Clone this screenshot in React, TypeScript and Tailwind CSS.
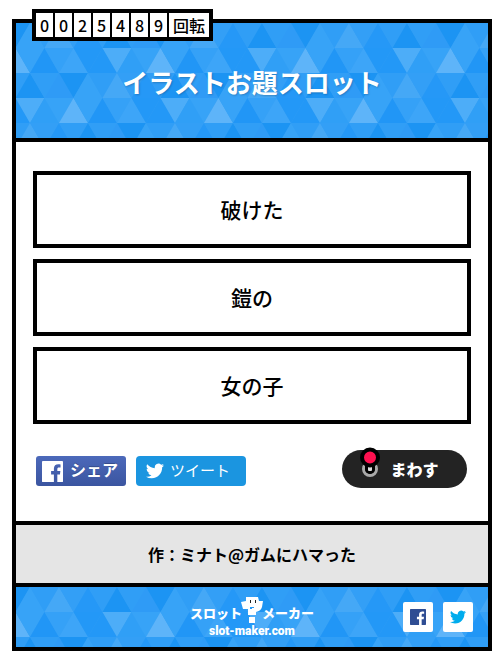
import React, { useId } from 'react';

const UP_A = ['#37a3f7', '#45a8f6', '#2598f7', '#1c94f3', '#2f9bf6'];
const DOWN_A = ['#309ef6', '#339ff6', '#309ef6', '#309ef6', '#1c94f3'];
const UP_B = ['#5eb4f9', '#2196f6', '#3da5f8', '#2398f7', '#309ff6'];
const DOWN_B = ['#37a3f7', '#35a1f7', '#2398f7', '#4dadf8', '#37a3f7'];

const SIDE = 29;
const HALF = SIDE / 2;
const ROW = 25;

function buildTriangles() {
  const shapes: { points: string; fill: string }[] = [];
  for (let pair = 0; pair < 5; pair++) {
    const shift = (pair * 2 * SIDE) % (5 * SIDE);
    for (let i = -10; i < 10; i++) {
      const c = ((i % 5) + 5) % 5;
      const y = pair * ROW * 2;
      const a = 14 + i * SIDE + shift;
      shapes.push({ points: `${a},${y} ${a + HALF},${y + ROW} ${a - HALF},${y + ROW}`, fill: UP_A[c] });
      shapes.push({ points: `${a},${y} ${a + SIDE},${y} ${a + HALF},${y + ROW}`, fill: DOWN_A[c] });
      const b = a - HALF;
      const z = y + ROW;
      shapes.push({ points: `${b},${z} ${b + HALF},${z + ROW} ${b - HALF},${z + ROW}`, fill: UP_B[c] });
      shapes.push({ points: `${b},${z} ${b + SIDE},${z} ${b + HALF},${z + ROW}`, fill: DOWN_B[c] });
    }
  }
  return shapes;
}

const TRIANGLES = buildTriangles();

function TriangleBackdrop() {
  const id = useId();
  return (
    <svg className="absolute inset-0 size-full" aria-hidden="true">
      <defs>
        <pattern id={id} width="145" height="250" patternUnits="userSpaceOnUse">
          <rect width="145" height="250" fill="#309ef6" />
          {TRIANGLES.map((t, i) => (
            <polygon key={i} points={t.points} fill={t.fill} />
          ))}
        </pattern>
      </defs>
      <rect width="100%" height="100%" fill={`url(#${id})`} />
    </svg>
  );
}

const BIRD =
  'M23.95 4.57a10 10 0 0 1-2.82.77 4.96 4.96 0 0 0 2.16-2.72c-.95.55-2 .96-3.13 1.18a4.92 4.92 0 0 0-8.38 4.48C7.69 8.09 4.07 6.13 1.64 3.16a4.93 4.93 0 0 0 1.52 6.57 4.9 4.9 0 0 1-2.23-.61v.06a4.92 4.92 0 0 0 3.95 4.83 5 5 0 0 1-2.21.08 4.94 4.94 0 0 0 4.6 3.42A9.87 9.87 0 0 1 0 19.54a13.99 13.99 0 0 0 7.55 2.21c9.05 0 14-7.5 14-13.98 0-.21 0-.42-.02-.63a9.94 9.94 0 0 0 2.46-2.55z';

function TwitterBird({ className }: { className: string }) {
  return (
    <svg viewBox="0 0 24 24" className={className} fill="currentColor" aria-hidden="true">
      <path d={BIRD} />
    </svg>
  );
}

function FacebookMark({ className }: { className: string }) {
  return (
    <svg viewBox="0 0 24 24" className={className} fill="currentColor" aria-hidden="true">
      <path d="M1 0H23Q24 0 24 1V23Q24 24 23 24H17.500V15.300H20.500L21 11.500H17.500V9.300C17.500 8 18 7.300 19.300 7.300H21.200V4C20.500 3.900 19.600 3.800 18.600 3.800C15.600 3.800 13.600 5.500 13.600 8.700V11.500H10.400V15.300H13.600V24H1Q0 24 0 23V1Q0 0 1 0Z" />
    </svg>
  );
}

function Mascot() {
  return (
    <svg viewBox="0 0 22 26" className="-mx-px h-[26px] w-[22px]" aria-hidden="true">
      <path
        fill="#fff"
        d="M5 0H17L18 4L22 4L21 10Q20 14 15 15V18H7V12H2L0 5L5 4Z"
      />
      <path fill="#2598f7" d="M9 10H13V11H11V12H9Z" />
      <path fill="#fff" d="M8 20H14V26H8Z" />
      <path fill="#222" d="M9 3H10V6H9ZM14 3H15V6H14Z" />
    </svg>
  );
}

function Lever() {
  return (
    <svg viewBox="0 0 22 34" className="h-[34px] w-[22px]" aria-hidden="true">
      <circle cx="11" cy="23" r="6.500" fill="none" stroke="#a9a9a9" strokeWidth="3" />
      <rect x="6" y="14" width="10" height="14" rx="5" fill="#000" />
      <rect x="9" y="19" width="4" height="6" rx="1" fill="#ddd" />
      <circle cx="11" cy="11.500" r="8" fill="#ff1150" stroke="#000" strokeWidth="4" />
    </svg>
  );
}

const DIGITS = ['0', '0', '2', '5', '4', '8', '9'];
const RESULTS = ['破けた', '鎧の', '女の子'];

export default function App() {
  return (
    <div className="bg-white pt-[19px] pr-[10px] pb-[7px] pl-3 font-['Noto_Sans_CJK_JP',sans-serif] text-black">
      <main className="relative border-4 border-black bg-white">
        <div className="absolute -top-[14px] left-4 z-10 flex h-8 gap-[2px] border-4 border-black bg-black text-base leading-6 font-medium">
          {DIGITS.map((d, i) => (
            <span key={i} className="w-[17px] bg-white text-center">
              {d}
            </span>
          ))}
          <span className="w-10 bg-white text-center">回転</span>
        </div>

        <header className="relative flex h-[119px] items-center justify-center border-b-4 border-black pt-[2px]">
          <TriangleBackdrop />
          <h1 className="relative text-[26px] leading-8 font-bold text-white [text-shadow:1px_1px_2px_rgba(0,0,0,0.2)]">
            イラストお題スロット
          </h1>
        </header>

        <section className="px-[17px] pt-[29px] pb-8">
          <ul className="flex flex-col gap-[11px]">
            {RESULTS.map((r) => (
              <li
                key={r}
                className="flex h-[77px] items-center justify-center border-4 border-black pb-[2px] text-[21px] leading-8 font-medium"
              >
                {r}
              </li>
            ))}
          </ul>

          <div className="mt-[26px] flex items-end justify-between pr-1 pl-[3px]">
            <div className="flex gap-[10px] pt-[6px] pb-[3px]">
              <a
                href="#share"
                className="flex h-[30px] w-[90px] items-center gap-[7px] rounded-[3px] bg-linear-to-b from-[#4c69ba] to-[#3b55a0] pl-[6px] text-base leading-6 font-bold text-white [text-shadow:0_-1px_0_#354c8c]"
              >
                <FacebookMark className="size-[21px]" />
                <span className="pb-1">シェア</span>
              </a>
              <a
                href="#tweet"
                className="flex h-[30px] w-[110px] items-center gap-[6px] rounded-[4px] bg-[#1b95e0] pl-[10px] text-[15px] leading-6 text-white"
              >
                <TwitterBird className="size-[18px]" />
                <span className="pb-[2px]">ツイート</span>
              </a>
            </div>
            <button
              type="button"
              className="relative mb-px h-[38px] w-[125px] rounded-full bg-[#232323] pl-5 text-base leading-6 font-black text-white"
            >
              <span className="absolute -top-1 left-[17px]">
                <Lever />
              </span>
              まわす
            </button>
          </div>
        </section>

        <p className="flex h-[66px] items-center justify-center border-y-4 border-black bg-[#e5e5e5] text-base leading-6 font-bold">
          作：ミナト@ガムにハマった
        </p>

        <footer className="relative flex h-[60px] items-center justify-center">
          <TriangleBackdrop />
          <a href="#top" className="relative pt-px text-white">
            <span className="flex items-end justify-center text-[13px] leading-5 font-black">
              スロット
              <Mascot />
              メーカー
            </span>
            <span className="block text-center font-['Roboto',sans-serif] text-xs leading-4 font-black">
              slot-maker.com
            </span>
          </a>
          <div className="absolute right-[15px] flex gap-[10px]">
            <a
              href="#facebook"
              aria-label="Facebook"
              className="flex size-[30px] items-center justify-center rounded-[2px] bg-white text-[#2f4d93]"
            >
              <FacebookMark className="size-4" />
            </a>
            <a
              href="#twitter"
              aria-label="Twitter"
              className="flex size-[30px] items-center justify-center rounded-[2px] bg-white text-[#00aced]"
            >
              <TwitterBird className="size-4" />
            </a>
          </div>
        </footer>
      </main>
    </div>
  );
}
